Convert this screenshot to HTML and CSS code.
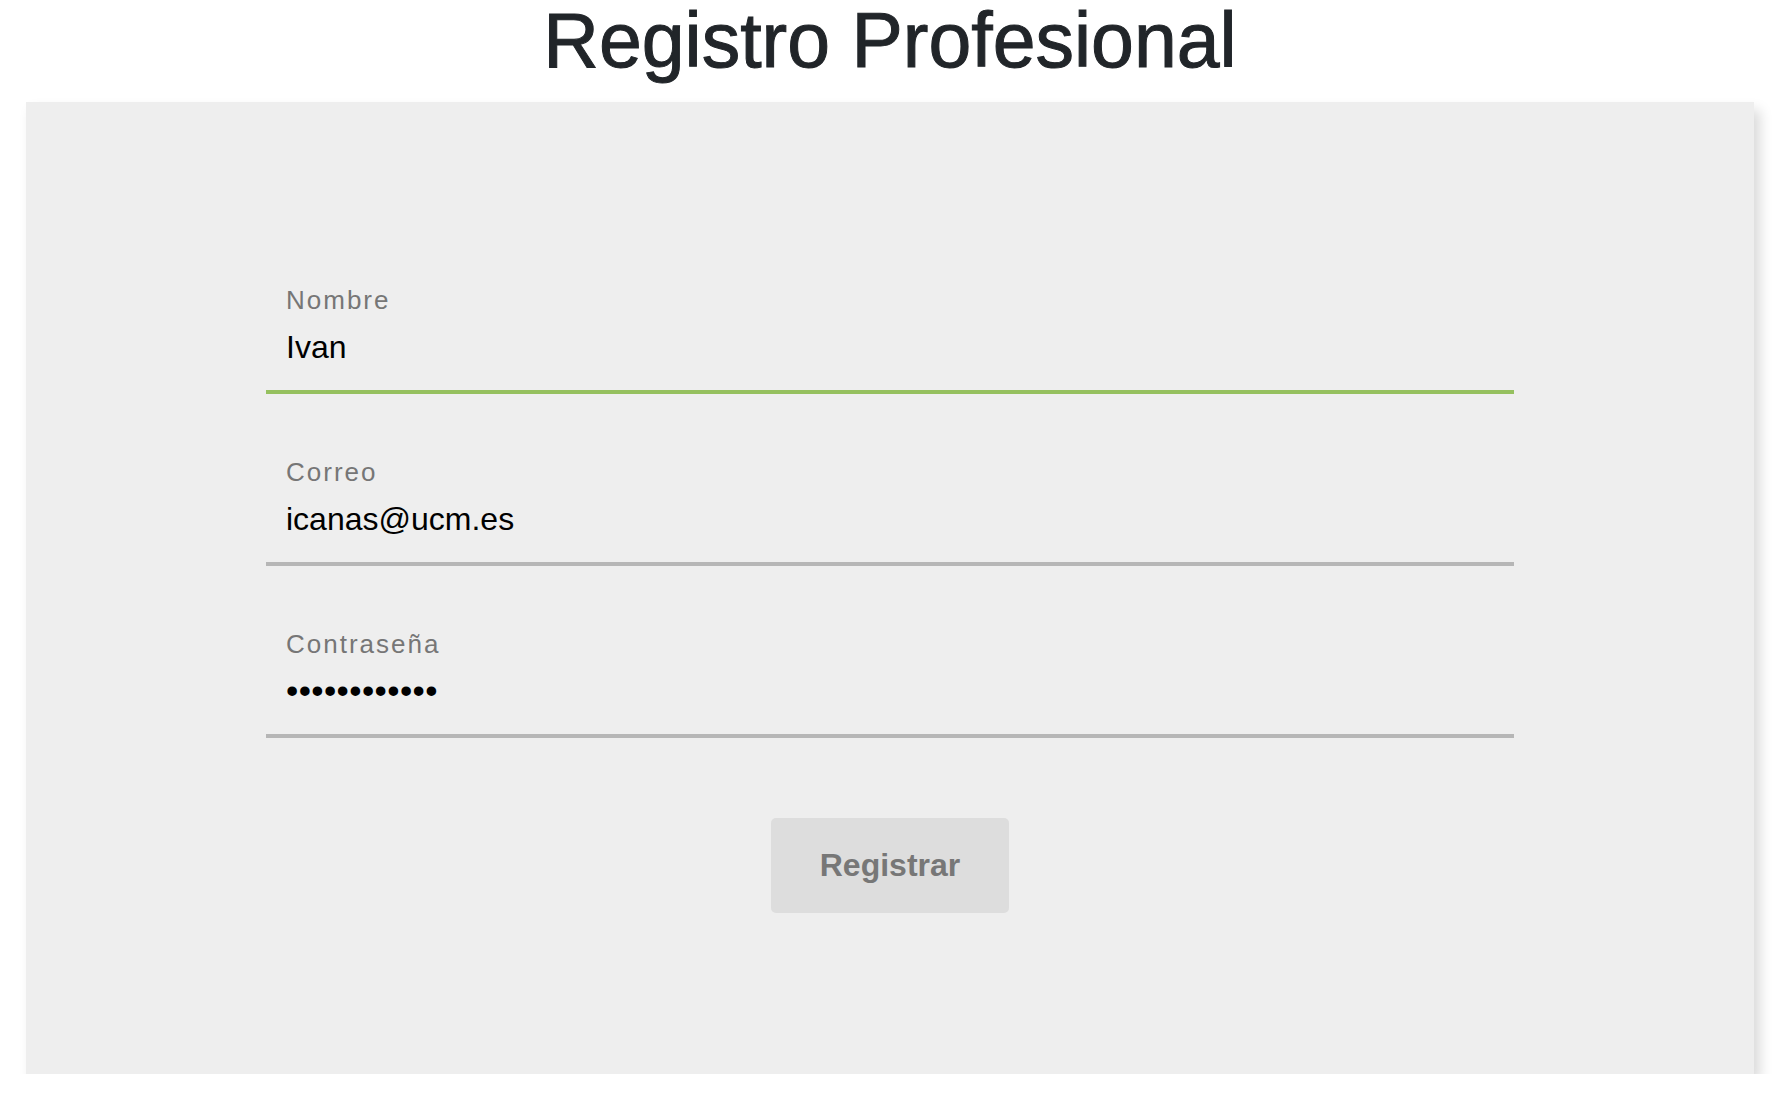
FILE: index.html
```html
<!DOCTYPE html>
<html lang="es">
<head>
<meta charset="utf-8">
<title>Registro Profesional</title>
<link rel="stylesheet" href="styles.css">
</head>
<body>
<div class="page">
  <h1 class="title">Registro Profesional</h1>
  <form class="panel">
    <div class="field field-active">
      <label class="field-label" for="nombre">Nombre</label>
      <input class="field-input" id="nombre" type="text" value="Ivan">
    </div>
    <div class="field">
      <label class="field-label" for="correo">Correo</label>
      <input class="field-input" id="correo" type="email" value="icanas@ucm.es">
    </div>
    <div class="field">
      <label class="field-label" for="pass">Contraseña</label>
      <input class="field-input field-password" id="pass" type="password" value="abcdefghijkl">
    </div>
    <div class="actions">
      <button class="btn" type="button">Registrar</button>
    </div>
  </form>
</div>
</body>
</html>
```
FILE: styles.css
```css
html, body {
  margin: 0;
  padding: 0;
  background: #ffffff;
}

body {
  font-family: "Liberation Sans", Arial, Helvetica, sans-serif;
}

.page {
  width: 1728px;
  margin-left: 26px;
}

.title {
  margin: 0 0 23px 0;
  padding-top: 2px;
  font-size: 77px;
  line-height: 1;
  font-weight: 400;
  color: #212529;
  -webkit-text-stroke: 1px #212529;
  text-align: center;
}

.panel {
  display: flex;
  flex-direction: column;
  background: #eeeeee;
  padding: 183px 240px 161px 240px;
  box-shadow: 6px 8px 12px rgba(0, 0, 0, 0.15);
}

.field {
  display: flex;
  flex-direction: column;
  border-bottom: 4px solid #b6b6b6;
  margin-bottom: 63px;
  padding: 0 20px 23px 20px;
}

.field-active {
  border-bottom-color: #95c05f;
}

.field-label {
  display: block;
  font-size: 26px;
  line-height: 30px;
  letter-spacing: 2px;
  color: #767676;
  margin-bottom: 12px;
}

.field-input {
  display: block;
  width: 100%;
  box-sizing: border-box;
  height: 40px;
  padding: 0;
  margin: 0;
  border: none;
  outline: none;
  background: transparent;
  font-family: "Liberation Sans", Arial, Helvetica, sans-serif;
  font-size: 32px;
  line-height: 40px;
  color: #000000;
}

.field-password {
  font-size: 35px;
  letter-spacing: 0.4px;
}

.actions {
  display: flex;
  justify-content: center;
  margin-top: 17px;
}

.btn {
  width: 238px;
  height: 95px;
  border: none;
  border-radius: 5px;
  background: #dddddd;
  color: #777777;
  font-family: "Liberation Sans", Arial, Helvetica, sans-serif;
  font-size: 32px;
  font-weight: 700;
  padding: 0;
  cursor: pointer;
}
```
